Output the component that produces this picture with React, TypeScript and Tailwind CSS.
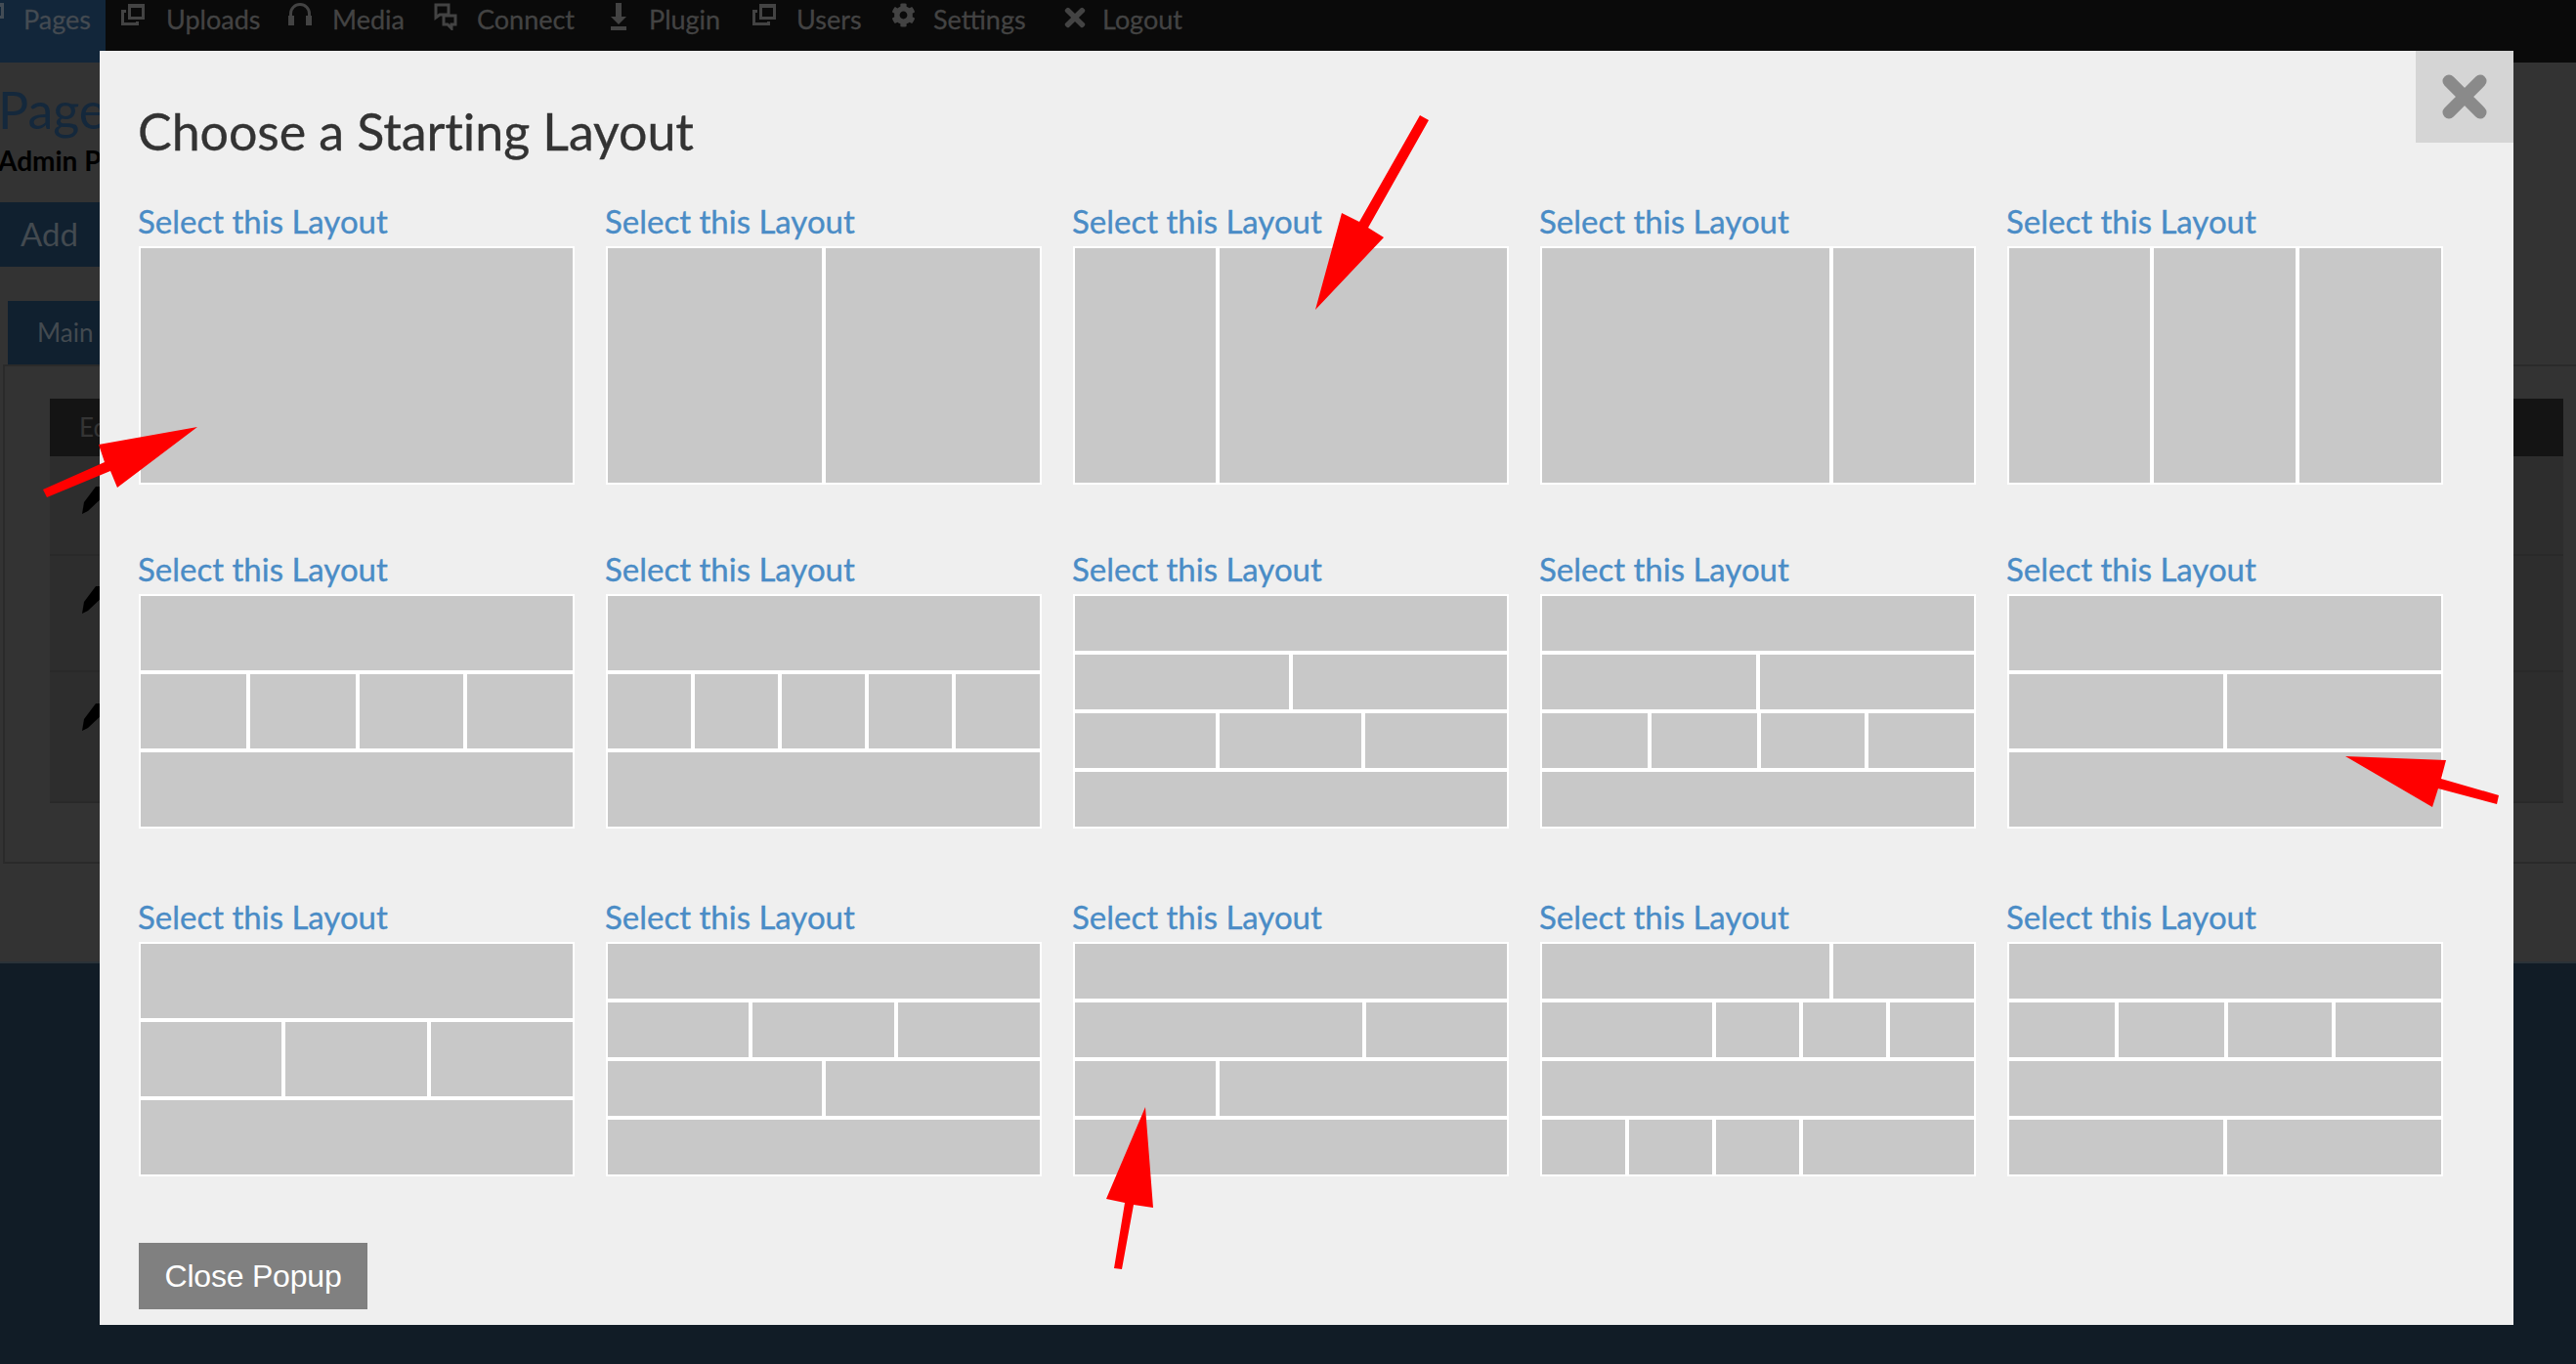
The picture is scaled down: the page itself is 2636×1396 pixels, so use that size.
import React from 'react';
import { FaCog, FaTimes } from 'react-icons/fa';

const font = 'font-["Lato","Noto_Sans",sans-serif]';

const WindowsIcon = () => (
  <svg width="24" height="24" viewBox="0 0 24 24" fill="currentColor">
    <path d="M7 1h17v16H7zM10 5v9h11V5z" fillRule="evenodd" />
    <path d="M0 7h5v3H3v10h12v-1h3v4H0z" />
  </svg>
);

const HeadphoneIcon = () => (
  <svg width="24" height="24" viewBox="0 0 24 24" fill="none" stroke="currentColor">
    <path d="M2.5 14V11a9.5 9.5 0 0 1 19 0v3" strokeWidth="3" />
    <rect x="0" y="13" width="6" height="10" fill="currentColor" stroke="none" />
    <rect x="18" y="13" width="6" height="10" fill="currentColor" stroke="none" />
  </svg>
);

const ChatIcon = () => (
  <svg width="24" height="28" viewBox="0 0 24 28" fill="none" stroke="currentColor" strokeWidth="3">
    <path d="M2 2h13v10H6l-4 3z" />
    <path d="M10 13h12v9h-4v4l-4-4h-4z" />
  </svg>
);

const PluginIcon = () => (
  <svg width="16" height="28" viewBox="0 0 16 28" fill="currentColor">
    <path d="M5 0h6v14h5l-8 8-8-8h5z" />
    <rect x="0" y="24" width="16" height="4" />
  </svg>
);

const navItems = [
  { label: 'Uploads', icon: <WindowsIcon />, box: 'w-[171px]', offset: 'w-[46px]' },
  { label: 'Media', icon: <HeadphoneIcon />, box: 'w-[149px]', offset: 'w-[45px]' },
  { label: 'Connect', icon: <ChatIcon />, box: 'w-[181px]', offset: 'w-[44px]' },
  { label: 'Plugin', icon: <PluginIcon />, box: 'w-[145px]', offset: 'w-[39px]' },
  { label: 'Users', icon: <WindowsIcon />, box: 'w-[142px]', offset: 'w-[45px]' },
  { label: 'Settings', icon: <FaCog size={25} />, box: 'w-[173px]', offset: 'w-[43px]' },
  { label: 'Logout', icon: <FaTimes size={30} />, box: 'w-[125px]', offset: 'w-[43px]' },
];

// widths snap to whole pixels the way the original's floats do, last cell takes the rest
const spans: Record<string, string> = {
  full: 'w-full',
  '1/2': 'w-[224px]',
  '1/3': 'w-[33.25%]',
  '2/3': 'w-[66.75%]',
  '1/4': 'w-[112px]',
  '1/4n': 'w-[110px]',
  '1/5': 'w-[89px]',
  '2/5': 'w-[178px]',
};

const full = ['full'];
const halves = ['1/2', '1/2'];
const thirds = ['1/3', '1/3', '1/3'];
const quarters = ['1/4', '1/4', '1/4n', '1/4'];
const fifths = ['1/5', '1/5', '1/5', '1/5', '1/5'];

const layouts: string[][][] = [
  [full],
  [halves],
  [['1/3', '2/3']],
  [['2/3', '1/3']],
  [thirds],
  [full, quarters, full],
  [full, fifths, full],
  [full, halves, thirds, full],
  [full, halves, quarters, full],
  [full, halves, full],
  [full, thirds, full],
  [full, thirds, halves, full],
  [full, ['2/3', '1/3'], ['1/3', '2/3'], full],
  [['2/3', '1/3'], ['2/5', '1/5', '1/5', '1/5'], full, ['1/5', '1/5', '1/5', '2/5']],
  [full, quarters, full, halves],
];

const LayoutCard = ({ rows, tall }: { rows: string[][]; tall: boolean }) => (
  <div>
    <a className="block h-12 pt-[2px] -ml-px text-[33px] leading-[40px] text-[#4a8cc6] whitespace-nowrap [-webkit-text-stroke:0.35px_#4a8cc6]">
      Select this Layout
    </a>
    <div className={`flex flex-col w-[446px] ${tall ? 'h-[244px]' : 'h-[240px]'}`}>
      {rows.map((row, i) => (
        <div key={i} className="flex flex-1">
          {row.map((span, j) => (
            <div key={j} className={`${spans[span]} last:grow border-2 border-white bg-[#c8c8c8]`} />
          ))}
        </div>
      ))}
    </div>
  </div>
);

const Pen = () => (
  <svg width="24" height="28" viewBox="0 0 24 28" fill="#000">
    <path d="M0 28 2 16 14 0h10v8L6 25z" />
  </svg>
);

const tableRows = [
  { box: 'h-[102px] pt-[31px]' },
  { box: 'h-[119px] pt-[31px]' },
  { box: 'h-[134px] pt-[32px]' },
];

export default function App() {
  return (
    <div className={`relative h-screen overflow-hidden bg-[#111c26] ${font}`}>
      <nav className="flex h-16 bg-[#0a0a0a] text-[#434343] text-[27px] leading-[40px] [-webkit-text-stroke:0.3px_#434343]">
        <div className="flex w-[108px] h-16 overflow-hidden bg-[#12263a] text-[#434c55]">
          <div className="w-[24px] shrink-0 -ml-[20px] mt-[2px] mr-[20px]">
            <WindowsIcon />
          </div>
          <span>Pages</span>
        </div>
        <div className="w-4" />
        {navItems.map((item) => (
          <div key={item.label} className={`flex shrink-0 ${item.box}`}>
            <div className={`${item.offset} shrink-0 pt-[3px]`}>{item.icon}</div>
            <span>{item.label}</span>
          </div>
        ))}
      </nav>

      <main className="h-[922px] bg-[#333333] border-b-2 border-[#2a3238]">
        <h1 className="pt-4 h-[82px] -ml-[2px] text-[52px] leading-[64px] text-[#14283c]">Pages</h1>
        <p className="h-[61px] -ml-[2px] text-[28px] leading-[36px] font-bold text-black">Admin Pages</p>
        <div className="flex w-[200px] h-[66px] items-center pl-[21px] bg-[#10202f] text-[#434a50] text-[33px]">Add</div>
        <div className="flex w-[200px] h-[65px] mt-[35px] ml-2 items-center pl-[30px] bg-[#10202f] text-[#434a50] text-[26px]">Main</div>
        <section className="h-[511px] ml-[3px] pt-[33px] pl-[46px] pr-[13px] border-t-2 border-l-2 border-b-2 border-[#2a2a2a]">
          <div className="flex h-[59px] items-center pl-[30px] bg-[#141414] text-[#343434] text-[26px]">Edit</div>
          {tableRows.map((row, i) => (
            <div key={i} className={`${row.box} pl-[33px] bg-[#2d2d2d] border-b-2 border-[#292929]`}>
              <Pen />
            </div>
          ))}
        </section>
      </main>

      <div className="absolute left-[102px] top-[52px] w-[2470px] h-[1304px] pl-10 bg-[#efefef]">
        <h2 className="h-[152px] pt-[50px] -ml-px text-[52px] leading-[64px] tracking-[-0.1px] text-[#333333] [-webkit-text-stroke:0.3px_#333333]">
          Choose a Starting Layout
        </h2>
        <div className="grid grid-cols-[repeat(5,446px)] auto-rows-[356px] gap-x-8">
          {layouts.map((rows, i) => (
            <LayoutCard key={i} rows={rows} tall={i < 5} />
          ))}
        </div>
        <button className='block w-[234px] h-[68px] bg-[#808080] text-white text-[32px] tracking-[-0.2px] font-["Liberation_Sans",sans-serif]'>
          Close Popup
        </button>
        <div className="absolute right-0 top-0 flex w-[100px] h-[94px] items-center justify-center bg-[#d5d5d5]">
          <svg width="46" height="46" viewBox="0 0 46 46" stroke="#8a8a8a" strokeWidth="13" strokeLinecap="round">
            <path d="M7 7 39 39M39 7 7 39" />
          </svg>
        </div>
      </div>

      <svg className="absolute inset-0 pointer-events-none" width="2636" height="1396" fill="#ff0000">
        <polygon points="202,437 101,455 107,473 44,501 48,509 113,482 120,499" />
        <polygon points="1346,317 1373,218 1391,227 1453,118 1462,123 1400,233 1416,243" />
        <polygon points="2400,774 2503,778 2498,797 2557,814 2555,823 2495,807 2489,826" />
        <polygon points="1172,1133 1180,1236 1160,1233 1148,1299 1140,1298 1151,1231 1132,1227" />
      </svg>
    </div>
  );
}
